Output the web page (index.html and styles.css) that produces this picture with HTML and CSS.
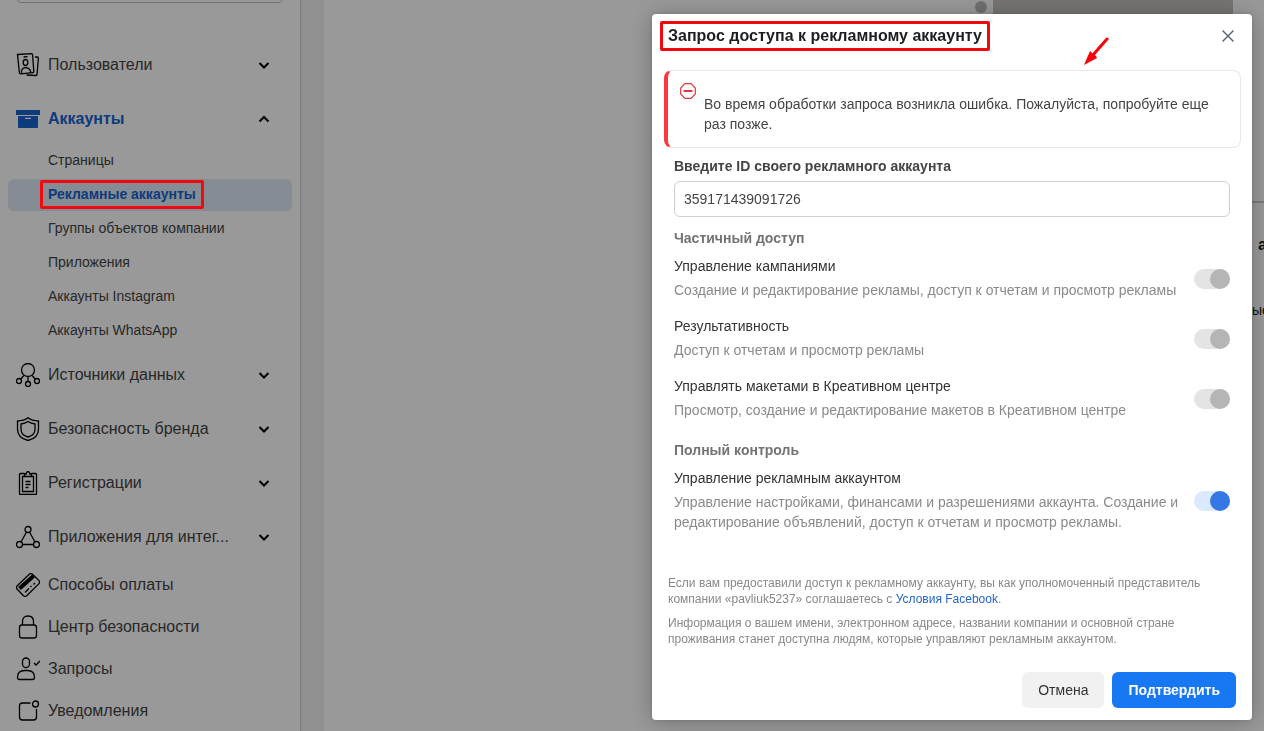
FILE: index.html
```html
<!DOCTYPE html>
<html lang="ru">
<head>
  <meta charset="UTF-8"/>
  <meta name="viewport" content="width=device-width, initial-scale=1.0"/>
  <title>Рекламные аккаунты</title>
  <link rel="stylesheet" href="styles.css">
</head>
<body>
  <div class="page">
    <aside class="sidebar">
      <input class="search" type="text" aria-label="Поиск"/>
      <nav class="nav">
        <button class="nav-item group">
          <svg class="icon" viewBox="0 0 24 24"><path d="M1.500 1.500 15.500.7q1 0 1.100 1l1.200 16.800q0 1-1 1.100L4.500 20.800q-1 0-1.100-1L1.500 1.500Z"/><path d="M19 4h2.500q1 .2.900 1.200L21 21.600q-.2 1-1.200.9L10.500 22M7.500 4l4-.3"/><ellipse cx="9.500" cy="9.500" rx="2.300" ry="3"/><path d="M5.500 20v-2q.8-3.200 4.200-3.300t4.800 3.300l.3 1.500"/></svg>
          <span class="name">Пользователи</span>
          <svg class="chevron" viewBox="0 0 12 12"><path d="m1.500 4 4.500 4.500L10.500 4"/></svg>
        </button>
        <div class="section">
          <button class="nav-item group active">
            <svg class="icon solid" viewBox="0 0 24 24"><path d="M.5 3h23q.5 0 .5.500V8H0V3.500Q0 3 .5 3ZM2 9h20v11q0 1-1 1H3q-1 0-1-1V9Zm7 1.800V12h6v-1.200H9Z"/></svg>
            <span class="name">Аккаунты</span>
            <svg class="chevron" viewBox="0 0 12 12"><path d="M1.500 8.500 6 4l4.500 4.500"/></svg>
          </button>
          <div class="sub">
            <a href="#">Страницы</a>
            <a href="#" class="current"><span class="marked">Рекламные аккаунты</span></a>
            <a href="#">Группы объектов компании</a>
            <a href="#">Приложения</a>
            <a href="#">Аккаунты Instagram</a>
            <a href="#">Аккаунты WhatsApp</a>
          </div>
        </div>
        <button class="nav-item group">
          <svg class="icon" viewBox="0 0 24 24"><circle cx="12" cy="7" r="6.500"/><circle cx="3" cy="18" r="2.500"/><circle cx="21" cy="18" r="2.500"/><circle cx="12" cy="21" r="2.500"/><path d="M12 13.500v5M7.800 12.500 4.800 16M16.200 12.500l3 3.500"/></svg>
          <span class="name">Источники данных</span>
          <svg class="chevron" viewBox="0 0 12 12"><path d="m1.500 4 4.500 4.500L10.500 4"/></svg>
        </button>
        <button class="nav-item group">
          <svg class="icon" viewBox="0 0 24 24"><path d="M12 .7Q16 3.700 22.500 4v8q0 9-10.500 11.500Q1.500 21 1.500 12V4Q8 3.700 12 .7Z"/><path d="M12 4.500q3 2 7 2.500v5q0 6.200-7 8-7-1.800-7-8V7q4-.5 7-2.500Z"/></svg>
          <span class="name">Безопасность бренда</span>
          <svg class="chevron" viewBox="0 0 12 12"><path d="m1.500 4 4.500 4.500L10.500 4"/></svg>
        </button>
        <button class="nav-item group">
          <svg class="icon" viewBox="0 0 24 24"><path d="M8.500 2.500h-4q-1 0-1 1v19q0 1 1 1h15q1 0 1-1v-19q0-1-1-1h-4"/><path d="M8.500 5.500V3h1.700q.2-2.500 1.800-2.500T13.800 3h1.700v2.500h-7ZM8.500 5.500h-2v15h11v-15h-2M9.500 10.500h5M9.500 13.500h5M9.500 16.500h3"/></svg>
          <span class="name">Регистрации</span>
          <svg class="chevron" viewBox="0 0 12 12"><path d="m1.500 4 4.500 4.500L10.500 4"/></svg>
        </button>
        <button class="nav-item group">
          <svg class="icon" viewBox="0 0 24 24"><circle cx="12" cy="4.500" r="3"/><circle cx="3.500" cy="19.500" r="3"/><circle cx="20.500" cy="19.500" r="3"/><path d="M10.500 7 5 17M13.500 7 19 17M6.500 19.500h11"/></svg>
          <span class="name">Приложения для интег...</span>
          <svg class="chevron" viewBox="0 0 12 12"><path d="m1.500 4 4.500 4.500L10.500 4"/></svg>
        </button>
        <a href="#" class="nav-item">
          <svg class="icon" viewBox="0 0 24 24"><path d="M1 13 13.500 1q1.500-1 3 .2L23 7.600q1.200 1.400 0 3L10.500 23q-1.500 1-3-.2L1 16q-1-1.500 0-3Z"/><path class="thick" d="M3.500 15.500 17.500 3"/><path d="m9 19.500 4-4M14.500 14l1-1M17.500 11.500l1.500-1.500"/></svg>
          <span class="name">Способы оплаты</span>
        </a>
        <a href="#" class="nav-item">
          <svg class="icon" viewBox="0 0 24 24"><rect x="3.500" y="10" width="17" height="13" rx="2.500"/><path d="M6.500 10V6.500q0-5.500 5.500-5.500t5.500 5.500V10"/></svg>
          <span class="name">Центр безопасности</span>
        </a>
        <a href="#" class="nav-item">
          <svg class="icon" viewBox="0 0 24 24"><rect x="6.500" y="1" width="7" height="9.500" rx="3.500"/><path d="M1.500 20.500q0-7 7-7h3q7 0 7 7 0 2-2 2h-13q-2 0-2-2ZM18 6l2 2 4-4"/></svg>
          <span class="name">Запросы</span>
        </a>
        <a href="#" class="nav-item">
          <svg class="icon" viewBox="0 0 24 24"><path d="M14.500 4h-8q-3 0-3 3v11q0 3 3 3h11q3 0 3-3v-8"/><circle cx="19.500" cy="5" r="3"/></svg>
          <span class="name">Уведомления</span>
        </a>
      </nav>
    </aside>

    <main class="content">
      <div class="banner"><span class="dot"></span><span class="bar"></span></div>
      <div class="details">
        <h2>а</h2>
        <p>ые</p>
      </div>
    </main>
  </div>

  <div class="overlay">
    <div class="dialog" role="dialog" aria-labelledby="dialogTitle">
      <header class="dialog-head">
        <h1 id="dialogTitle"><span class="marked">Запрос доступа к рекламному аккаунту</span></h1>
        <button class="close" aria-label="Закрыть"><svg viewBox="0 0 12 12"><path d="m.5.5 11 11M11.500.5l-11 11"/></svg></button>
      </header>
      <svg class="arrow" viewBox="0 0 26 30"><path class="shaft" d="M24 3 10 19"/><path class="head" d="M1 29 7 15l2 2 4 3 1 2Z"/></svg>

      <div class="alert">
        <svg viewBox="0 0 16 16"><path d="M5 .7h6L15.300 5v6L11 15.300H5L.7 11V5Z"/><path class="minus" d="M3.500 8h9"/></svg>
        <p>Во время обработки запроса возникла ошибка. Пожалуйста, попробуйте еще раз позже.</p>
      </div>

      <div class="fields">
        <label class="field-label" for="accountId">Введите ID своего рекламного аккаунта</label>
        <input class="account-id" type="text" id="accountId" value="359171439091726"/>

        <h3>Частичный доступ</h3>
        <div class="option">
          <label for="campaigns">Управление кампаниями<small>Создание и редактирование рекламы, доступ к отчетам и просмотр рекламы</small></label>
          <input class="toggle" type="checkbox" id="campaigns" checked disabled/>
        </div>
        <div class="option">
          <label for="performance">Результативность<small>Доступ к отчетам и просмотр рекламы</small></label>
          <input class="toggle" type="checkbox" id="performance" checked disabled/>
        </div>
        <div class="option">
          <label for="mockups">Управлять макетами в Креативном центре<small>Просмотр, создание и редактирование макетов в Креативном центре</small></label>
          <input class="toggle" type="checkbox" id="mockups" checked disabled/>
        </div>

        <h3>Полный контроль</h3>
        <div class="option">
          <label for="manage">Управление рекламным аккаунтом<small>Управление настройками, финансами и разрешениями аккаунта. Создание и редактирование объявлений, доступ к отчетам и просмотр рекламы.</small></label>
          <input class="toggle" type="checkbox" id="manage" checked/>
        </div>
      </div>

      <div class="legal">
        <p>Если вам предоставили доступ к рекламному аккаунту, вы как уполномоченный представитель компании «pavliuk5237» соглашаетесь с <a href="#">Условия Facebook</a>.</p>
        <p>Информация о вашем имени, электронном адресе, названии компании и основной стране проживания станет доступна людям, которые управляют рекламным аккаунтом.</p>
      </div>

      <footer class="actions">
        <button class="btn">Отмена</button>
        <button class="btn primary">Подтвердить</button>
      </footer>
    </div>
  </div>
</body>
</html>
```
FILE: styles.css
```css
* { box-sizing: border-box; }
body { margin: 0; font-family: "Liberation Sans", Arial, sans-serif; font-size: 14px; line-height: 20px; color: #1c1e21; background: #fff; overflow: hidden; }
h1, h2, h3, p { margin: 0; }
a { text-decoration: none; color: inherit; }
button { font: inherit; color: inherit; border: none; background: none; padding: 0; cursor: pointer; }
svg { flex: none; fill: none; stroke: currentColor; }

.page { display: flex; height: 100vh; }

/* sidebar */
.sidebar { flex: 0 0 301px; padding: 0 8px; border-right: 1px solid #ccc; }
.search { display: block; width: calc(100% - 16px); height: 36px; margin: -33px 8px 36px; border: 1px solid #bbb; border-radius: 6px; background: none; }
.nav { display: flex; flex-direction: column; gap: 2px; }
.nav-item { display: flex; align-items: center; gap: 8px; width: 100%; height: 40px; padding: 0 22px 0 8px; font-size: 16px; text-align: left; color: #444; }
.nav-item.group { height: 52px; }
.nav-item.active { color: #1763cf; font-weight: bold; }
.name { flex: 1; white-space: nowrap; }
.icon { width: 24px; height: 24px; stroke: #000; stroke-width: 1.3; }
.icon.solid { fill: #1763cf; fill-rule: evenodd; stroke: none; }
.icon .thick { stroke-width: 4; }
.chevron { width: 12px; height: 12px; stroke: #000; stroke-width: 2; }
.sub { display: flex; flex-direction: column; gap: 2px; }
.sub a { height: 32px; padding-left: 40px; line-height: 30px; border-radius: 6px; color: #444; }
.sub .current { background: #e0eaf6; color: #1763cf; font-weight: bold; }

/* content behind the dialog */
.content { flex: 1; overflow: hidden; border-left: 23px solid #f0f0f0; }
.banner { display: flex; justify-content: flex-end; gap: 6px; height: 201px; padding-right: 31px; }
.dot { width: 12px; height: 12px; margin-top: 1px; border-radius: 50%; background: #bbb; }
.bar { width: 240px; height: 20px; background: #c6c3bc; }
.details { width: 12px; margin-left: auto; padding-top: 32px; border-top: 2px solid #ccc; }
.details h2 { padding-left: 6px; font-size: 16px; line-height: 20px; }
.details p { margin-top: 45px; }

/* dialog */
.overlay { position: fixed; inset: 0; z-index: 10; display: flex; justify-content: flex-end; align-items: flex-start; padding: 14px 12px; background: rgba(0,0,0,0.4); }
.dialog { position: relative; width: 600px; max-width: 100%; padding: 8px 11px 12px 12px; background: #fff; border-radius: 4px; box-shadow: 0 2px 26px rgba(0,0,0,0.25), 0 0 5px rgba(0,0,0,0.15); }
.dialog-head { display: flex; align-items: center; justify-content: space-between; height: 28px; padding: 0 7px 0 4px; }
.dialog-head h1 { font-size: 16px; line-height: 20px; }
.close { display: flex; color: #606770; }
.close svg { width: 12px; height: 12px; stroke-width: 1.5; }

.alert { display: flex; gap: 8px; margin-top: 20px; padding: 12px 20px 13px 12px; border: 1px solid #e8e8e8; border-left: 4px solid #fa383e; border-radius: 8px; color: #444; }
.alert svg { width: 16px; height: 16px; stroke: #e0353b; stroke-width: 1.2; }
.alert .minus { stroke-width: 2; }
.alert p { padding-top: 11px; }

.fields { padding: 8px 11px 0 10px; }
.field-label { display: block; font-weight: bold; color: #444; }
.account-id { display: block; width: 100%; height: 36px; margin: 5px 0 11px; padding: 0 9px; border: 1px solid #ccd0d5; border-radius: 6px; font: inherit; color: #444; }
.fields h3 { margin-bottom: 8px; font-size: 14px; color: #737373; }
.option { display: flex; align-items: center; justify-content: space-between; gap: 8px; margin-bottom: 16px; color: #333; }
.option + h3 { margin-top: 20px; }
.option small { display: block; margin-top: 4px; font-size: 14px; color: #8a8a8a; }
.toggle { appearance: none; flex: none; display: flex; justify-content: flex-end; width: 36px; height: 20px; margin: 2px 0 0; border-radius: 10px; background: #dbe9ff; }
.toggle::before { content: ""; width: 20px; height: 20px; border-radius: 50%; background: #3578e5; }
.toggle:disabled { background: #e4e4e4; }
.toggle:disabled::before { background: #b5b5b5; }

.legal { padding: 27px 20px 0 4px; font-size: 12px; line-height: 16px; color: #888; }
.legal p + p { margin-top: 8px; }
.legal a { color: #2566c8; }

.actions { display: flex; justify-content: flex-end; gap: 8px; padding: 25px 5px 0 0; }
.btn { height: 36px; padding: 0 16px; border-radius: 6px; background: #f1f1f1; color: #333; }
.btn.primary { background: #1877f2; color: #fff; font-weight: bold; }

/* red marks */
.marked { position: relative; white-space: nowrap; }
.marked::after { content: ""; position: absolute; z-index: 20; inset: -6px -8px -7px; border: 3px solid #f2090f; border-radius: 2px; }
.arrow { position: absolute; top: 22px; right: 143px; width: 26px; height: 30px; }
.arrow .shaft { stroke: #fb0007; stroke-width: 3; stroke-linecap: round; }
.arrow .head { fill: #fb0007; stroke: none; }
```
